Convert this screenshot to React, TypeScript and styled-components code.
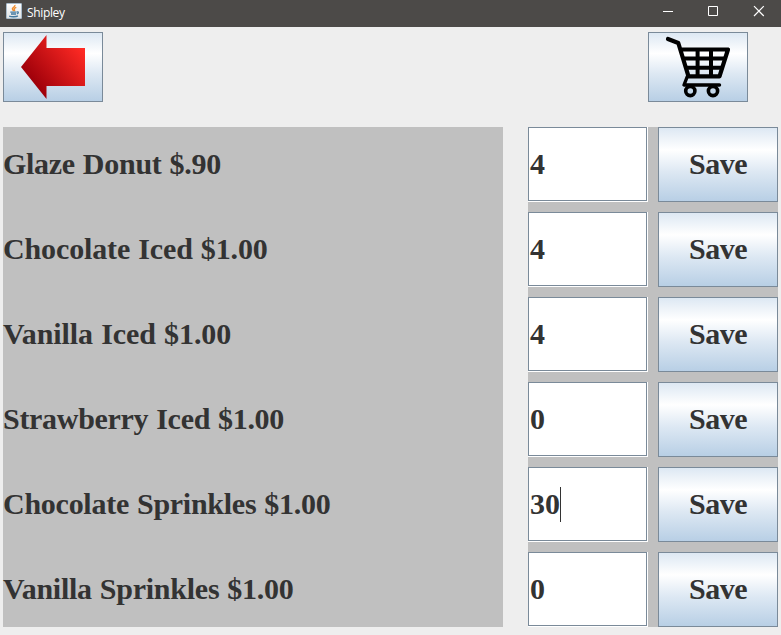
import React from 'react';
import styled, { createGlobalStyle } from 'styled-components';

const GlobalStyle = createGlobalStyle`
  * { box-sizing: border-box; }
  body { margin: 0; background: #eeeeee; }
`;

const STEEL = '#7a8a99';
const INK = '#333333';

const Window = styled.div`
  width: 781px;
  height: 635px;
  overflow: hidden;
  background: #eeeeee;
  color: ${INK};
  font: bold 30px/34px 'Liberation Serif', 'Times New Roman', serif;
`;

const TitleBar = styled.header`
  display: flex;
  align-items: center;
  height: 27px;
  padding-left: 6px;
  background: #4c4a48;
`;

const AppIcon = styled.svg`
  display: block;
  width: 16px;
  height: 16px;
  margin-bottom: 5px;
`;

const Title = styled.h1`
  flex: 1;
  margin: 0 0 2px 5px;
  color: #ffffff;
  font: 400 12px/16px 'Open Sans', 'Segoe UI', sans-serif;
  letter-spacing: -0.35px;
`;

const WindowControls = styled.div`
  display: flex;
  height: 100%;
`;

const WindowControl = styled.button<{ $width: number }>`
  width: ${({ $width }) => $width}px;
  height: 27px;
  padding: 0;
  border: 0;
  background: none;
  svg { display: block; }
`;

const Toolbar = styled.nav`
  display: flex;
  justify-content: space-between;
  padding: 5px 33px 25px 3px;
`;

const MetalButton = styled.button<{ $width: number; $height: number }>`
  display: flex;
  align-items: center;
  justify-content: center;
  width: ${({ $width }) => $width}px;
  height: ${({ $height }) => $height}px;
  padding: 0;
  border: 1px solid ${STEEL};
  border-radius: 0;
  background: linear-gradient(#dde8f3 0%, #ffffff 30%, #dde8f3 60%, #b8cfe5 100%);
  color: inherit;
  font: inherit;
  svg { display: block; }
`;

const SaveButton = styled(MetalButton)`
  padding-bottom: 2px;
  letter-spacing: -0.5px;
`;

const Content = styled.main`
  display: grid;
  grid-template-columns: 500px 250px;
  column-gap: 25px;
  padding-left: 3px;
`;

const Panel = styled.section<{ $columns: string }>`
  display: grid;
  grid-template-columns: ${({ $columns }) => $columns};
  grid-auto-rows: 75px;
  gap: 10px;
  background: #c0c0c0;
`;

const Label = styled.div<{ $spacing: number }>`
  display: flex;
  align-items: center;
  padding-bottom: 2px;
  white-space: pre;
  word-spacing: 0.75px;
  letter-spacing: ${({ $spacing }) => $spacing}px;
`;

const Field = styled.div`
  border: solid #ffffff;
  border-width: 0 1px 1px 0;
`;

const FieldInner = styled.div`
  display: flex;
  align-items: center;
  height: 74px;
  padding-left: 1px;
  border: 1px solid ${STEEL};
  background: #ffffff;
`;

const Quantity = styled.span`
  padding-bottom: 1px;
`;

const Caret = styled.span`
  width: 1px;
  height: 35px;
  margin-top: 1px;
  background: ${INK};
`;

const items = [
  { name: 'Glaze Donut $.90', quantity: '4', spacing: -0.28 },
  { name: 'Chocolate Iced $1.00', quantity: '4', spacing: -0.13 },
  { name: 'Vanilla Iced $1.00', quantity: '4', spacing: -0.08 },
  { name: 'Strawberry Iced $1.00', quantity: '0', spacing: -0.3 },
  { name: 'Chocolate Sprinkles $1.00', quantity: '30', spacing: -0.26, focused: true },
  { name: 'Vanilla Sprinkles $1.00', quantity: '0', spacing: -0.25 },
];

const JavaIcon = () => (
  <AppIcon viewBox="0 0 16 16" aria-hidden="true">
    <defs>
      <linearGradient id="cupTile" x1="0" y1="0" x2="0" y2="1">
        <stop offset="0" stopColor="#ffffff" />
        <stop offset="1" stopColor="#dfe3e6" />
      </linearGradient>
    </defs>
    <rect x="0.5" y="0.5" width="15" height="15" rx="0.5" fill="url(#cupTile)" stroke="#a9bccb" />
    <path d="M8.9 2C9.6 4 5.3 4.7 6.5 6.4L7.7 8M10.3 4.4C8 5.4 7.7 6 8.6 7.2L8 8.2" fill="none" stroke="#ef8b2c" strokeWidth="1.4" />
    <path d="M4.3 9.1h6.2M5 11h5M3.2 13.1c2.5 1 7 .8 8.7-.2M10.8 9c2-.6 2 1.3 0 2" fill="none" stroke="#42789f" strokeWidth="1.3" />
  </AppIcon>
);

const BackIcon = () => (
  <svg width="98" height="68" viewBox="4 33 98 68" aria-hidden="true">
    <defs>
      <linearGradient id="redArrow" gradientUnits="userSpaceOnUse" x1="34" y1="84" x2="80" y2="46">
        <stop offset="0" stopColor="#9e000a" />
        <stop offset="1" stopColor="#ff2a24" />
      </linearGradient>
    </defs>
    <path d="M21 67L46.5 35V48H85V86H46.5V99Z" fill="url(#redArrow)" />
  </svg>
);

const CartIcon = () => (
  <svg width="98" height="68" viewBox="649 33 98 68" fill="none" stroke="#000000" aria-hidden="true">
    <path d="M668 39L678.3 43L688.5 76.3H719.5L728 49.5H681" strokeWidth="4.2" strokeLinecap="round" strokeLinejoin="round" />
    <path d="M682 58.4H726M685 67.8H723M697.6 49V77M711 49V77" strokeWidth="4" />
    <path d="M687.5 76L684 85H719.5" strokeWidth="3.4" strokeLinecap="round" strokeLinejoin="round" />
    <circle cx="690.3" cy="91" r="4.6" strokeWidth="3.6" />
    <circle cx="713" cy="91" r="4.6" strokeWidth="3.6" />
  </svg>
);

export default function App() {
  return (
    <Window>
      <GlobalStyle />
      <TitleBar>
        <JavaIcon />
        <Title>Shipley</Title>
        <WindowControls>
          <WindowControl $width={45} aria-label="Minimize">
            <svg width="45" height="27"><path d="M18 11.5H28" stroke="#fff" /></svg>
          </WindowControl>
          <WindowControl $width={45} aria-label="Maximize">
            <svg width="45" height="27"><path d="M18.5 6.5H27.5V15.5H18.5Z" fill="none" stroke="#fff" /></svg>
          </WindowControl>
          <WindowControl $width={46} aria-label="Close">
            <svg width="46" height="27"><path d="M19 6.2L28.8 16M28.8 6.2L19 16" stroke="#fff" strokeWidth="1.2" /></svg>
          </WindowControl>
        </WindowControls>
      </TitleBar>
      <Toolbar>
        <MetalButton $width={100} $height={70} aria-label="Back"><BackIcon /></MetalButton>
        <MetalButton $width={100} $height={70} aria-label="Cart"><CartIcon /></MetalButton>
      </Toolbar>
      <Content>
        <Panel $columns="1fr">
          {items.map((item) => (
            <Label key={item.name} $spacing={item.spacing}>{item.name}</Label>
          ))}
        </Panel>
        <Panel $columns="120px 120px">
          {items.map((item) => (
            <React.Fragment key={item.name}>
              <Field>
                <FieldInner>
                  <Quantity>{item.quantity}</Quantity>
                  {item.focused && <Caret />}
                </FieldInner>
              </Field>
              <SaveButton $width={120} $height={75}>Save</SaveButton>
            </React.Fragment>
          ))}
        </Panel>
      </Content>
    </Window>
  );
}
